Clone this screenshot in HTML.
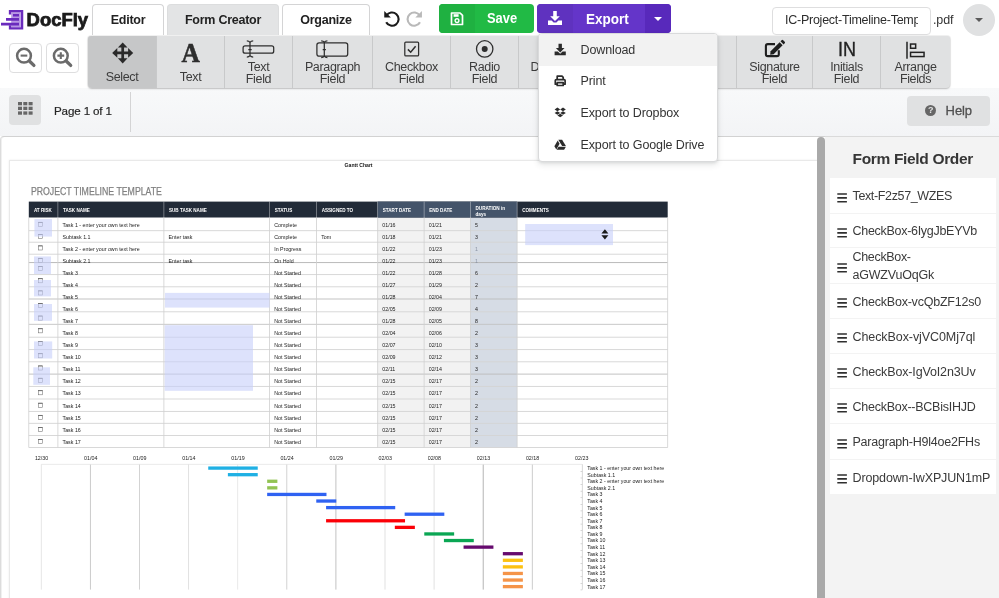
<!DOCTYPE html>
<html><head><meta charset="utf-8"><title>DocFly</title>
<style>
*{box-sizing:border-box;margin:0;padding:0}
html,body{width:999px;height:598px;overflow:hidden;background:#fff}
body{font-family:"Liberation Sans",sans-serif;color:#333;position:relative;font-size:13px;will-change:transform}
.abs{position:absolute}
.t{position:absolute;white-space:nowrap;line-height:1}
/* top bar */
#topbar{position:absolute;left:0;top:0;width:999px;height:37px;background:#fff}
.tab{position:absolute;top:4px;height:31px;border:1px solid #d4d4d5;border-bottom:none;border-radius:4px 4px 0 0;background:#fff}
.tab.gray{background:#e3e4e5;border-color:#dcddde}
.tab span{position:absolute;left:0;right:0;top:8px;text-align:center;font-size:12.5px;font-weight:bold;color:#222;line-height:14px;letter-spacing:-0.25px}
/* toolbar */
#toolbar{position:absolute;left:88px;top:36px;width:862px;height:52px;background:#e0e1e2;border-radius:3px 3px 4px 4px;box-shadow:0 1px 2px rgba(0,0,0,.2), 0 0 0 1px rgba(0,0,0,.05)}
.tool{position:absolute;top:0;height:52px;border-right:1px solid #c8c9ca}
.tool .lbl{position:absolute;left:0;right:0;text-align:center;font-size:12.5px;color:#3c3c3c;line-height:12px;letter-spacing:-0.35px}
.tool.sel{background:#c6c7c8}
/* sub bar */
#subbar{position:absolute;left:0;top:88px;width:999px;height:48px;background:linear-gradient(#f8f9fa,#f3f4f6)}
.btn{position:absolute;border-radius:4px;background:#e0e1e2}
.zbtn{position:absolute;top:43px;width:33px;height:30px;border:1px solid #dededf;border-radius:4px;background:#fff}
/* doc */
#docwrap{position:absolute;left:0;top:136px;width:825px;height:462px;background:#fff;overflow:hidden}
#outer{position:absolute;left:0;top:0;width:840px;height:480px;background:#fff;border:1px solid #d2d2d2;border-left-color:#dcdcdc;border-radius:4px 0 0 0;box-shadow:inset 1px 0 0 #f0f0f0}
#page{position:absolute;left:9px;top:24px;width:830px;height:460px;background:#fff;border:1px solid #e9e9e9;box-shadow:0 0 2px rgba(0,0,0,.08)}
#pdf{position:absolute;left:0;top:0;overflow:hidden}
#scroll{position:absolute;left:817px;top:137px;width:8px;height:470px;background:#a9a9a9;border-radius:4px 4px 0 0}
/* side */
#side{position:absolute;left:825px;top:136px;width:174px;height:462px;background:#f3f3f3;box-shadow:inset 0 1px 0 #dadada}
.fitem{position:absolute;left:5px;width:166px;background:#fff}
.fitem .tx{position:absolute;left:22.5px;font-size:12.5px;color:#3a3a3a;white-space:nowrap;line-height:18px}
.burger{position:absolute;left:7px;width:10px;height:9px;border-top:1.6px solid #333;border-bottom:1.6px solid #333}
.burger:after{content:"";position:absolute;left:0;right:0;top:2.1px;height:1.6px;background:#333}
/* menu */
#menu{position:absolute;left:538px;top:33px;width:180px;height:129px;background:#fff;border:1px solid #d9dadb;border-radius:4px;box-shadow:0 1px 3px rgba(34,36,38,.10), 0 3px 6px rgba(34,36,38,.10)}
.mi{position:absolute;left:0;width:178px;height:32px}
.mi span{position:absolute;left:41.5px;top:8px;font-size:12.5px;color:#333;line-height:16px;white-space:nowrap;letter-spacing:-0.12px}

</style></head>
<body>
<div id="topbar">
  <!-- logo -->
  <svg class="abs" style="left:0;top:0" width="92" height="37" viewBox="0 0 92 37" font-family="'Liberation Sans', sans-serif">
    <rect x="11.2" y="12.2" width="9.6" height="15" fill="#b897e4"/>
    <path d="M10 14.6V11.100H22.100V28.400H10V25.200" fill="none" stroke="#6a2bbd" stroke-width="2.300"/>
    <path d="M13 15.250H19M6 19.400H19M1 24.150H19" fill="none" stroke="#6a2bbd" stroke-width="2.600"/>
    <text x="26.6" y="26.200" font-size="17.800" font-weight="bold" fill="#1b1b1b" stroke="#1b1b1b" stroke-width="0.750" textLength="61.500" lengthAdjust="spacingAndGlyphs">DocFly</text>
  </svg>
  <div class="tab" style="left:92px;width:72px"><span>Editor</span></div>
  <div class="tab gray" style="left:167px;width:112px"><span>Form Creator</span></div>
  <div class="tab" style="left:282px;width:88px"><span>Organize</span></div>
  <!-- undo / redo -->
  <svg class="abs" style="left:382.900px;top:8.800px" width="19.200" height="19.200" viewBox="0 0 18 18"><path d="M3.2 6.2A6.2 6.2 0 1 1 3 12.4" fill="none" stroke="#1b1b1b" stroke-width="2"/><path d="M1.2 1.8V8H7.4Z" fill="#1b1b1b"/></svg>
  <svg class="abs" style="left:403.600px;top:8.800px" width="19.200" height="19.200" viewBox="0 0 18 18"><path d="M14.8 6.2A6.2 6.2 0 1 0 15 12.4" fill="none" stroke="#b9b9b9" stroke-width="2"/><path d="M16.8 1.8V8H10.6Z" fill="#b9b9b9"/></svg>
  <!-- save -->
  <div class="abs" style="left:439px;top:4px;width:95px;height:29px;background:#21ba45;border-radius:4px;overflow:hidden">
    <div class="abs" style="left:0;top:0;width:36px;height:29px;background:#1fb141"></div>
    <svg class="abs" style="left:11px;top:8px" width="14" height="14" viewBox="0 0 14 14"><path d="M1.5 1h8.6l2.4 2.4v9.1h-11z" fill="none" stroke="#fff" stroke-width="1.7" stroke-linejoin="round"/><rect x="3.6" y="2.2" width="5" height="2.6" fill="#fff"/><circle cx="7" cy="8.6" r="1.9" fill="none" stroke="#fff" stroke-width="1.4"/></svg>
    <div class="t" style="left:48.200px;top:6.400px;font-size:15px;font-weight:bold;color:#fff;transform:scaleX(0.860);transform-origin:0 0">Save</div>
  </div>
  <!-- export -->
  <div class="abs" style="left:537px;top:4px;width:134px;height:29px;background:#6435c9;border-radius:4px;overflow:hidden">
    <div class="abs" style="left:0;top:0;width:36px;height:29px;background:#5f32bf"></div>
    <div class="abs" style="left:108px;top:0;width:26px;height:29px;background:#5829bb"></div>
    <svg class="abs" style="left:11px;top:7px" width="14" height="15" viewBox="0 0 14 15"><path d="M5.2 0h3.6v5.2h3L7 10 2.200 5.2h3z" fill="#fff"/><path d="M0 9.600h3.600l2 2h2.800l2-2H14v4.400H0z" fill="#fff"/></svg>
    <div class="t" style="left:49.200px;top:6.600px;font-size:15px;font-weight:bold;color:#fff;transform:scaleX(0.900);transform-origin:0 0">Export</div>
    <div class="abs" style="left:117px;top:13px;width:0;height:0;border-left:4px solid transparent;border-right:4px solid transparent;border-top:4.500px solid #fff"></div>
  </div>
  <!-- filename -->
  <div class="abs" style="left:772px;top:7px;width:159px;height:28px;border:1px solid #dededf;border-radius:4px;background:#fff;overflow:hidden">
    <div class="t" style="left:12px;top:6px;font-size:12.500px;color:#2d2d2d;width:133px;overflow:hidden;letter-spacing:-0.250px">IC-Project-Timeline-Template</div>
  </div>
  <div class="t" style="left:933px;top:13.500px;font-size:12.500px;color:#333;letter-spacing:-0.100px">.pdf</div>
  <div class="abs" style="left:963px;top:4px;width:32px;height:32px;border-radius:16px;background:#e0e1e2"></div>
  <div class="abs" style="left:975px;top:18px;width:0;height:0;border-left:4px solid transparent;border-right:4px solid transparent;border-top:4px solid #5a5a5a"></div>
</div>
<div class="zbtn" style="left:9px"></div>
<div class="zbtn" style="left:46px"></div>
<svg class="abs" style="left:0;top:36px" width="88" height="50" viewBox="0 36 88 50">
  <g fill="none" stroke="#6b6b6b">
    <circle cx="24" cy="55.650" r="6.900" stroke-width="2.500"/>
    <path d="M29.600 61.200L33.900 65.400" stroke-width="3.300" stroke-linecap="round"/>
    <path d="M20.600 55.600H27.300" stroke-width="2.100"/>
    <circle cx="60.800" cy="55.650" r="6.900" stroke-width="2.500"/>
    <path d="M66.400 61.200L70.700 65.400" stroke-width="3.300" stroke-linecap="round"/>
    <path d="M57.400 55.600H64.200M60.800 52.200V59" stroke-width="2.100"/>
  </g>
</svg>
<div id="subbar">
  <div class="btn" style="left:9px;top:7px;width:32px;height:30px"></div>
  <svg class="abs" style="left:17.600px;top:14.300px" width="15" height="13" viewBox="0 0 15 13"><g fill="#666"><rect x="0" y="0" width="4" height="3.300"/><rect x="5.300" y="0" width="4" height="3.300"/><rect x="10.600" y="0" width="4" height="3.300"/><rect x="0" y="4.700" width="4" height="3.300"/><rect x="5.300" y="4.700" width="4" height="3.300"/><rect x="10.600" y="4.700" width="4" height="3.300"/><rect x="0" y="9.400" width="4" height="3.300"/><rect x="5.300" y="9.400" width="4" height="3.300"/><rect x="10.600" y="9.400" width="4" height="3.300"/></g></svg>
  <div class="t" style="left:54px;top:17.400px;font-size:11.600px;color:#262626;letter-spacing:-0.130px;-webkit-text-stroke:0.200px #262626">Page 1 of 1</div>
  <div class="abs" style="left:130px;top:4px;width:1px;height:40px;background:#d4d4d5"></div>
  <div class="btn" style="left:907px;top:8px;width:83px;height:30px"></div>
  <div class="abs" style="left:924.700px;top:17px;width:11.400px;height:11.400px;border-radius:6px;background:#666"></div>
  <div class="t" style="left:927.900px;top:18.300px;font-size:9px;font-weight:bold;color:#e0e1e2">?</div>
  <div class="t" style="left:945.600px;top:16px;font-size:13px;color:#505050;-webkit-text-stroke:0.300px #505050;letter-spacing:-0.100px">Help</div>
</div>
<div id="toolbar">
  <div class="tool sel" style="left:0;width:69px;border-radius:3px 0 0 4px"><div class="lbl" style="top:35px">Select</div></div>
  <div class="tool" style="left:69px;width:68px"><div class="lbl" style="top:35px">Text</div></div>
  <div class="tool" style="left:137px;width:68px"><div class="lbl" style="top:25.400px">Text<br>Field</div></div>
  <div class="tool" style="left:205px;width:80px"><div class="lbl" style="top:25.400px">Paragraph<br>Field</div></div>
  <div class="tool" style="left:285px;width:78px"><div class="lbl" style="top:25.400px">Checkbox<br>Field</div></div>
  <div class="tool" style="left:363px;width:68px"><div class="lbl" style="top:25.400px">Radio<br>Field</div></div>
  <div class="tool" style="left:431px;width:78px"><div class="lbl" style="top:25.400px">Dropdown<br>Field</div></div>
  <div class="tool" style="left:509px;width:70px"><div class="lbl" style="top:25.400px">Date<br>Field</div></div>
  <div class="tool" style="left:579px;width:70px"><div class="lbl" style="top:25.400px">Image<br>Field</div></div>
  <div class="tool" style="left:649px;width:76px"><div class="lbl" style="top:25.400px">Signature<br>Field</div></div>
  <div class="tool" style="left:725px;width:68px"><div class="lbl" style="top:25.400px">Initials<br>Field</div></div>
  <div class="tool" style="left:793px;width:69px;border-right:none"><div class="lbl" style="top:25.400px">Arrange<br>Fields</div></div>
</div>
<!-- toolbar icons (absolute page coords) -->
<svg class="abs" style="left:88px;top:36px" width="863" height="30" viewBox="88 36 863 30" font-family="'Liberation Sans', sans-serif">
  <!-- select: move arrows -->
  <g fill="none" stroke="#2a2a2a" stroke-width="2.700">
    <path d="M116 52.900H129.400M122.700 46.200V59.600"/>
  </g>
  <g fill="#2a2a2a">
    <path d="M122.700 42.400L127.500 47.500H117.900z"/>
    <path d="M122.700 63.400L127.500 58.300H117.900z"/>
    <path d="M112.200 52.900L117.300 48.100V57.700z"/>
    <path d="M133.200 52.900L128.100 48.100V57.700z"/>
  </g>
  <!-- Text: serif A -->
  <text x="181.500" y="62.300" font-family="'Liberation Serif', serif" font-weight="bold" font-size="26.500" fill="#2e2e2e" stroke="#2e2e2e" stroke-width="0.500" textLength="18.400" lengthAdjust="spacingAndGlyphs">A</text>
  <!-- Text field -->
  <g fill="none" stroke="#2e2e2e" stroke-width="1.250">
    <rect x="243.100" y="45.800" width="30.600" height="7.400" rx="2"/>
    <path d="M250 41.800V56.200M246.800 40.900Q249 40.900 250 42.300Q251 40.900 253.200 40.900M246.800 57.100Q249 57.100 250 55.700Q251 57.100 253.200 57.100M248.300 49.500H251.700"/>
  </g>
  <!-- Paragraph field -->
  <g fill="none" stroke="#2e2e2e" stroke-width="1.250">
    <rect x="316.900" y="42.800" width="30.800" height="13.400" rx="2.200"/>
    <path d="M324.300 41.600V56.800M321.200 40.800Q323.300 40.800 324.300 42.200Q325.300 40.800 327.400 40.800M321.200 57.600Q323.300 57.600 324.300 56.200Q325.300 57.600 327.400 57.600M322.700 49.500H325.900"/>
  </g>
  <!-- Checkbox -->
  <g fill="none" stroke="#2e2e2e">
    <rect x="404.800" y="42.100" width="13.800" height="13.800" rx="1" stroke-width="1.250"/>
    <path d="M407.900 49.400L410.700 52.200L415.600 46.300" stroke-width="1.500"/>
  </g>
  <!-- Radio -->
  <circle cx="484.700" cy="48.900" r="8.200" fill="none" stroke="#2e2e2e" stroke-width="1.300"/>
  <circle cx="484.700" cy="48.900" r="3" fill="#2e2e2e"/>
  <!-- Signature: pen-square -->
  <g>
    <path d="M775 44.100H767.800Q765.900 44.100 765.900 46V54.200Q765.900 56.100 767.800 56.100H776.900Q778.800 56.100 778.800 54.200V50.200" fill="none" stroke="#1f1f1f" stroke-width="2.100"/>
    <path d="M770.600 51.200L779.600 42.200L782.600 45.200L773.600 54.200L770.200 54.700z" fill="#1f1f1f"/>
    <path d="M780.500 41.300L781.600 40.200Q782.400 39.400 783.200 40.200L784.700 41.700Q785.500 42.500 784.700 43.300L783.600 44.400z" fill="#1f1f1f"/>
  </g>
  <!-- Initials -->
  <text x="837.900" y="55.700" font-size="19.300" fill="#222" stroke="#222" stroke-width="0.350" textLength="18" lengthAdjust="spacingAndGlyphs">IN</text>
  <!-- Arrange -->
  <g fill="none" stroke="#222" stroke-width="1.500">
    <path d="M907 41.700V58.700"/>
    <rect x="910.550" y="44.050" width="5.100" height="4.200"/>
    <rect x="910.550" y="52.350" width="13.500" height="4.200"/>
  </g>
</svg>
<div id="docwrap">
<div id="outer"></div>
<div id="page"></div>
<svg id="pdf" class="abs" style="left:0;top:0" width="817" height="462" viewBox="0 0 817 462" font-family="'Liberation Sans', sans-serif">
<text x="344.6" y="30.6" font-size="4.8" fill="#111" textLength="27.98" lengthAdjust="spacingAndGlyphs" font-weight="bold">Gantt Chart</text>
<text x="30.9" y="59" font-size="11.2" fill="#808080" textLength="131.07" lengthAdjust="spacingAndGlyphs" stroke="#808080" stroke-width="0.25">PROJECT TIMELINE TEMPLATE</text>
<rect x="377.7" y="81.5" width="92.7" height="230" fill="#f2f2f2"/>
<rect x="470.4" y="81.5" width="46.7" height="230" fill="#d6dce5"/>
<rect x="28.8" y="65.6" width="638.9" height="15.9" fill="#222b38"/>
<rect x="377.7" y="65.6" width="139.4" height="15.9" fill="#44546a"/>
<rect x="57.6" y="65.6" width="0.6" height="15.9" fill="#fff" opacity=".6"/>
<rect x="163.6" y="65.6" width="0.6" height="15.9" fill="#fff" opacity=".6"/>
<rect x="269.3" y="65.6" width="0.6" height="15.9" fill="#fff" opacity=".6"/>
<rect x="316.3" y="65.6" width="0.6" height="15.9" fill="#fff" opacity=".6"/>
<rect x="377.4" y="65.6" width="0.6" height="15.9" fill="#fff" opacity=".6"/>
<rect x="423.8" y="65.6" width="0.6" height="15.9" fill="#fff" opacity=".6"/>
<rect x="470.1" y="65.6" width="0.6" height="15.9" fill="#fff" opacity=".6"/>
<rect x="516.8" y="65.6" width="0.6" height="15.9" fill="#fff" opacity=".6"/>
<text x="33.9" y="75.8" font-size="5" fill="#fff" textLength="17.96" lengthAdjust="spacingAndGlyphs" font-weight="bold">AT RISK</text>
<text x="63" y="75.8" font-size="5" fill="#fff" textLength="26.86" lengthAdjust="spacingAndGlyphs" font-weight="bold">TASK NAME</text>
<text x="169" y="75.8" font-size="5" fill="#fff" textLength="37.79" lengthAdjust="spacingAndGlyphs" font-weight="bold">SUB TASK NAME</text>
<text x="274.7" y="75.8" font-size="5" fill="#fff" textLength="17.62" lengthAdjust="spacingAndGlyphs" font-weight="bold">STATUS</text>
<text x="321.7" y="75.8" font-size="5" fill="#fff" textLength="31.44" lengthAdjust="spacingAndGlyphs" font-weight="bold">ASSIGNED TO</text>
<text x="382.8" y="75.8" font-size="5" fill="#fff" textLength="28.29" lengthAdjust="spacingAndGlyphs" font-weight="bold">START DATE</text>
<text x="429.2" y="75.8" font-size="5" fill="#fff" textLength="23.05" lengthAdjust="spacingAndGlyphs" font-weight="bold">END DATE</text>
<text x="522.2" y="75.8" font-size="5" fill="#fff" textLength="26.69" lengthAdjust="spacingAndGlyphs" font-weight="bold">COMMENTS</text>
<text x="475.5" y="73.6" font-size="4.7" fill="#fff" textLength="29.64" lengthAdjust="spacingAndGlyphs" font-weight="bold">DURATION in</text>
<text x="475.5" y="79.6" font-size="4.7" fill="#fff" textLength="10.6" lengthAdjust="spacingAndGlyphs" font-weight="bold">days</text>
<rect x="28.8" y="94.25" width="638.9" height="0.9" fill="#d4d4d4"/>
<rect x="28.8" y="105.75" width="638.9" height="0.9" fill="#d4d4d4"/>
<rect x="28.8" y="117.75" width="638.9" height="0.9" fill="#d4d4d4"/>
<rect x="28.8" y="126.15" width="638.9" height="0.9" fill="#b4b4b4"/>
<rect x="28.8" y="138.15" width="638.9" height="0.9" fill="#d4d4d4"/>
<rect x="28.8" y="150.35" width="638.9" height="0.9" fill="#d4d4d4"/>
<rect x="28.8" y="162.55" width="638.9" height="0.9" fill="#bcbcbc"/>
<rect x="28.8" y="175.35" width="638.9" height="0.9" fill="#d4d4d4"/>
<rect x="28.8" y="187.85" width="638.9" height="0.9" fill="#c2c2c2"/>
<rect x="28.8" y="200.75" width="638.9" height="0.9" fill="#d4d4d4"/>
<rect x="28.8" y="213.15" width="638.9" height="0.9" fill="#d4d4d4"/>
<rect x="28.8" y="225.35" width="638.9" height="0.9" fill="#d4d4d4"/>
<rect x="28.8" y="237.65" width="638.9" height="0.9" fill="#bcbcbc"/>
<rect x="28.8" y="249.95" width="638.9" height="0.9" fill="#d4d4d4"/>
<rect x="28.8" y="262.55" width="638.9" height="0.9" fill="#d4d4d4"/>
<rect x="28.8" y="274.95" width="638.9" height="0.9" fill="#d4d4d4"/>
<rect x="28.8" y="286.85" width="638.9" height="0.9" fill="#d4d4d4"/>
<rect x="28.8" y="299.05" width="638.9" height="0.9" fill="#d4d4d4"/>
<rect x="28.8" y="311.05" width="638.9" height="0.9" fill="#d4d4d4"/>
<rect x="28.4" y="81.5" width="0.8" height="230" fill="#d0d0d0"/>
<rect x="57.5" y="81.5" width="0.8" height="230" fill="#d0d0d0"/>
<rect x="163.5" y="81.5" width="0.8" height="230" fill="#d0d0d0"/>
<rect x="269.2" y="81.5" width="0.8" height="230" fill="#d0d0d0"/>
<rect x="316.2" y="81.5" width="0.8" height="230" fill="#d0d0d0"/>
<rect x="377.3" y="81.5" width="0.8" height="230" fill="#d0d0d0"/>
<rect x="423.7" y="81.5" width="0.8" height="230" fill="#d0d0d0"/>
<rect x="470" y="81.5" width="0.8" height="230" fill="#d0d0d0"/>
<rect x="516.7" y="81.5" width="0.8" height="230" fill="#d0d0d0"/>
<rect x="667.3" y="81.5" width="0.8" height="230" fill="#d0d0d0"/>
<rect x="38.3" y="86.2" width="4.2" height="4.2" fill="#fff" stroke="#6e6e6e" stroke-width="0.55"/>
<rect x="38.3" y="86" width="4.2" height="0.7" fill="#555"/>
<text x="62.5" y="90.75" font-size="5.5" fill="#222" textLength="77.28" lengthAdjust="spacingAndGlyphs">Task 1 - enter your own text here</text>
<text x="274.2" y="90.75" font-size="5.5" fill="#222" textLength="22.71" lengthAdjust="spacingAndGlyphs">Complete</text>
<text x="382.3" y="90.75" font-size="5.5" fill="#222" textLength="13.28" lengthAdjust="spacingAndGlyphs">01/16</text>
<text x="428.7" y="90.75" font-size="5.5" fill="#222" textLength="13.28" lengthAdjust="spacingAndGlyphs">01/21</text>
<text x="475" y="90.75" font-size="5.5" fill="#222" textLength="2.95" lengthAdjust="spacingAndGlyphs">5</text>
<rect x="38.3" y="98.5" width="4.2" height="4.2" fill="#fff" stroke="#6e6e6e" stroke-width="0.55"/>
<rect x="38.3" y="98.3" width="4.2" height="0.7" fill="#555"/>
<text x="62.5" y="102.8" font-size="5.5" fill="#222" textLength="28.03" lengthAdjust="spacingAndGlyphs">Subtask 1.1</text>
<text x="168.5" y="102.8" font-size="5.5" fill="#222" textLength="23.89" lengthAdjust="spacingAndGlyphs">Enter task</text>
<text x="274.2" y="102.8" font-size="5.5" fill="#222" textLength="22.71" lengthAdjust="spacingAndGlyphs">Complete</text>
<text x="321.2" y="102.8" font-size="5.5" fill="#222" textLength="10.03" lengthAdjust="spacingAndGlyphs">Tom</text>
<text x="382.3" y="102.8" font-size="5.5" fill="#222" textLength="13.28" lengthAdjust="spacingAndGlyphs">01/18</text>
<text x="428.7" y="102.8" font-size="5.5" fill="#222" textLength="13.28" lengthAdjust="spacingAndGlyphs">01/21</text>
<text x="475" y="102.8" font-size="5.5" fill="#222" textLength="2.95" lengthAdjust="spacingAndGlyphs">3</text>
<rect x="38.3" y="109.8" width="4.2" height="4.2" fill="#fff" stroke="#6e6e6e" stroke-width="0.55"/>
<rect x="38.3" y="109.6" width="4.2" height="0.7" fill="#555"/>
<text x="62.5" y="114.85" font-size="5.5" fill="#222" textLength="77.28" lengthAdjust="spacingAndGlyphs">Task 2 - enter your own text here</text>
<text x="274.2" y="114.85" font-size="5.5" fill="#222" textLength="27.14" lengthAdjust="spacingAndGlyphs">In Progress</text>
<text x="382.3" y="114.85" font-size="5.5" fill="#222" textLength="13.28" lengthAdjust="spacingAndGlyphs">01/22</text>
<text x="428.7" y="114.85" font-size="5.5" fill="#222" textLength="13.28" lengthAdjust="spacingAndGlyphs">01/23</text>
<text x="475" y="114.85" font-size="5.5" fill="#8a93a3" textLength="2.95" lengthAdjust="spacingAndGlyphs">1</text>
<rect x="38.3" y="122.2" width="4.2" height="4.2" fill="#fff" stroke="#6e6e6e" stroke-width="0.55"/>
<rect x="38.3" y="122" width="4.2" height="0.7" fill="#555"/>
<text x="62.5" y="126.9" font-size="5.5" fill="#222" textLength="28.03" lengthAdjust="spacingAndGlyphs">Subtask 2.1</text>
<text x="168.5" y="126.9" font-size="5.5" fill="#222" textLength="23.89" lengthAdjust="spacingAndGlyphs">Enter task</text>
<text x="274.2" y="126.9" font-size="5.5" fill="#222" textLength="19.47" lengthAdjust="spacingAndGlyphs">On Hold</text>
<text x="382.3" y="126.9" font-size="5.5" fill="#222" textLength="13.28" lengthAdjust="spacingAndGlyphs">01/22</text>
<text x="428.7" y="126.9" font-size="5.5" fill="#222" textLength="13.28" lengthAdjust="spacingAndGlyphs">01/23</text>
<text x="475" y="126.9" font-size="5.5" fill="#8a93a3" textLength="2.95" lengthAdjust="spacingAndGlyphs">1</text>
<rect x="38.3" y="130.5" width="4.2" height="4.2" fill="#fff" stroke="#6e6e6e" stroke-width="0.55"/>
<rect x="38.3" y="130.3" width="4.2" height="0.7" fill="#555"/>
<text x="62.5" y="138.95" font-size="5.5" fill="#222" textLength="15.34" lengthAdjust="spacingAndGlyphs">Task 3</text>
<text x="274.2" y="138.95" font-size="5.5" fill="#222" textLength="26.84" lengthAdjust="spacingAndGlyphs">Not Started</text>
<text x="382.3" y="138.95" font-size="5.5" fill="#222" textLength="13.28" lengthAdjust="spacingAndGlyphs">01/22</text>
<text x="428.7" y="138.95" font-size="5.5" fill="#222" textLength="13.28" lengthAdjust="spacingAndGlyphs">01/28</text>
<text x="475" y="138.95" font-size="5.5" fill="#222" textLength="2.95" lengthAdjust="spacingAndGlyphs">6</text>
<rect x="38.3" y="142.6" width="4.2" height="4.2" fill="#fff" stroke="#6e6e6e" stroke-width="0.55"/>
<rect x="38.3" y="142.4" width="4.2" height="0.7" fill="#555"/>
<text x="62.5" y="151" font-size="5.5" fill="#222" textLength="15.34" lengthAdjust="spacingAndGlyphs">Task 4</text>
<text x="274.2" y="151" font-size="5.5" fill="#222" textLength="26.84" lengthAdjust="spacingAndGlyphs">Not Started</text>
<text x="382.3" y="151" font-size="5.5" fill="#222" textLength="13.28" lengthAdjust="spacingAndGlyphs">01/27</text>
<text x="428.7" y="151" font-size="5.5" fill="#222" textLength="13.28" lengthAdjust="spacingAndGlyphs">01/29</text>
<text x="475" y="151" font-size="5.5" fill="#222" textLength="2.95" lengthAdjust="spacingAndGlyphs">2</text>
<rect x="38.3" y="154.8" width="4.2" height="4.2" fill="#fff" stroke="#6e6e6e" stroke-width="0.55"/>
<rect x="38.3" y="154.6" width="4.2" height="0.7" fill="#555"/>
<text x="62.5" y="163.05" font-size="5.5" fill="#222" textLength="15.34" lengthAdjust="spacingAndGlyphs">Task 5</text>
<text x="274.2" y="163.05" font-size="5.5" fill="#222" textLength="26.84" lengthAdjust="spacingAndGlyphs">Not Started</text>
<text x="382.3" y="163.05" font-size="5.5" fill="#222" textLength="13.28" lengthAdjust="spacingAndGlyphs">01/28</text>
<text x="428.7" y="163.05" font-size="5.5" fill="#222" textLength="13.28" lengthAdjust="spacingAndGlyphs">02/04</text>
<text x="475" y="163.05" font-size="5.5" fill="#222" textLength="2.95" lengthAdjust="spacingAndGlyphs">7</text>
<rect x="38.3" y="167.3" width="4.2" height="4.2" fill="#fff" stroke="#6e6e6e" stroke-width="0.55"/>
<rect x="38.3" y="167.1" width="4.2" height="0.7" fill="#555"/>
<text x="62.5" y="175.1" font-size="5.5" fill="#222" textLength="15.34" lengthAdjust="spacingAndGlyphs">Task 6</text>
<text x="274.2" y="175.1" font-size="5.5" fill="#222" textLength="26.84" lengthAdjust="spacingAndGlyphs">Not Started</text>
<text x="382.3" y="175.1" font-size="5.5" fill="#222" textLength="13.28" lengthAdjust="spacingAndGlyphs">02/05</text>
<text x="428.7" y="175.1" font-size="5.5" fill="#222" textLength="13.28" lengthAdjust="spacingAndGlyphs">02/09</text>
<text x="475" y="175.1" font-size="5.5" fill="#222" textLength="2.95" lengthAdjust="spacingAndGlyphs">4</text>
<rect x="38.3" y="179.95" width="4.2" height="4.2" fill="#fff" stroke="#6e6e6e" stroke-width="0.55"/>
<rect x="38.3" y="179.75" width="4.2" height="0.7" fill="#555"/>
<text x="62.5" y="187.15" font-size="5.5" fill="#222" textLength="15.34" lengthAdjust="spacingAndGlyphs">Task 7</text>
<text x="274.2" y="187.15" font-size="5.5" fill="#222" textLength="26.84" lengthAdjust="spacingAndGlyphs">Not Started</text>
<text x="382.3" y="187.15" font-size="5.5" fill="#222" textLength="13.28" lengthAdjust="spacingAndGlyphs">01/28</text>
<text x="428.7" y="187.15" font-size="5.5" fill="#222" textLength="13.28" lengthAdjust="spacingAndGlyphs">02/05</text>
<text x="475" y="187.15" font-size="5.5" fill="#222" textLength="2.95" lengthAdjust="spacingAndGlyphs">8</text>
<rect x="38.3" y="192.65" width="4.2" height="4.2" fill="#fff" stroke="#6e6e6e" stroke-width="0.55"/>
<rect x="38.3" y="192.45" width="4.2" height="0.7" fill="#555"/>
<text x="62.5" y="199.2" font-size="5.5" fill="#222" textLength="15.34" lengthAdjust="spacingAndGlyphs">Task 8</text>
<text x="274.2" y="199.2" font-size="5.5" fill="#222" textLength="26.84" lengthAdjust="spacingAndGlyphs">Not Started</text>
<text x="382.3" y="199.2" font-size="5.5" fill="#222" textLength="13.28" lengthAdjust="spacingAndGlyphs">02/04</text>
<text x="428.7" y="199.2" font-size="5.5" fill="#222" textLength="13.28" lengthAdjust="spacingAndGlyphs">02/06</text>
<text x="475" y="199.2" font-size="5.5" fill="#222" textLength="2.95" lengthAdjust="spacingAndGlyphs">2</text>
<rect x="38.3" y="205.3" width="4.2" height="4.2" fill="#fff" stroke="#6e6e6e" stroke-width="0.55"/>
<rect x="38.3" y="205.1" width="4.2" height="0.7" fill="#555"/>
<text x="62.5" y="211.25" font-size="5.5" fill="#222" textLength="15.34" lengthAdjust="spacingAndGlyphs">Task 9</text>
<text x="274.2" y="211.25" font-size="5.5" fill="#222" textLength="26.84" lengthAdjust="spacingAndGlyphs">Not Started</text>
<text x="382.3" y="211.25" font-size="5.5" fill="#222" textLength="13.28" lengthAdjust="spacingAndGlyphs">02/07</text>
<text x="428.7" y="211.25" font-size="5.5" fill="#222" textLength="13.28" lengthAdjust="spacingAndGlyphs">02/10</text>
<text x="475" y="211.25" font-size="5.5" fill="#222" textLength="2.95" lengthAdjust="spacingAndGlyphs">3</text>
<rect x="38.3" y="217.6" width="4.2" height="4.2" fill="#fff" stroke="#6e6e6e" stroke-width="0.55"/>
<rect x="38.3" y="217.4" width="4.2" height="0.7" fill="#555"/>
<text x="62.5" y="223.3" font-size="5.5" fill="#222" textLength="18.29" lengthAdjust="spacingAndGlyphs">Task 10</text>
<text x="274.2" y="223.3" font-size="5.5" fill="#222" textLength="26.84" lengthAdjust="spacingAndGlyphs">Not Started</text>
<text x="382.3" y="223.3" font-size="5.5" fill="#222" textLength="13.28" lengthAdjust="spacingAndGlyphs">02/09</text>
<text x="428.7" y="223.3" font-size="5.5" fill="#222" textLength="13.28" lengthAdjust="spacingAndGlyphs">02/12</text>
<text x="475" y="223.3" font-size="5.5" fill="#222" textLength="2.95" lengthAdjust="spacingAndGlyphs">3</text>
<rect x="38.3" y="229.85" width="4.2" height="4.2" fill="#fff" stroke="#6e6e6e" stroke-width="0.55"/>
<rect x="38.3" y="229.65" width="4.2" height="0.7" fill="#555"/>
<text x="62.5" y="235.35" font-size="5.5" fill="#222" textLength="17.9" lengthAdjust="spacingAndGlyphs">Task 11</text>
<text x="274.2" y="235.35" font-size="5.5" fill="#222" textLength="26.84" lengthAdjust="spacingAndGlyphs">Not Started</text>
<text x="382.3" y="235.35" font-size="5.5" fill="#222" textLength="12.89" lengthAdjust="spacingAndGlyphs">02/11</text>
<text x="428.7" y="235.35" font-size="5.5" fill="#222" textLength="13.28" lengthAdjust="spacingAndGlyphs">02/14</text>
<text x="475" y="235.35" font-size="5.5" fill="#222" textLength="2.95" lengthAdjust="spacingAndGlyphs">3</text>
<rect x="38.3" y="242.15" width="4.2" height="4.2" fill="#fff" stroke="#6e6e6e" stroke-width="0.55"/>
<rect x="38.3" y="241.95" width="4.2" height="0.7" fill="#555"/>
<text x="62.5" y="247.4" font-size="5.5" fill="#222" textLength="18.29" lengthAdjust="spacingAndGlyphs">Task 12</text>
<text x="274.2" y="247.4" font-size="5.5" fill="#222" textLength="26.84" lengthAdjust="spacingAndGlyphs">Not Started</text>
<text x="382.3" y="247.4" font-size="5.5" fill="#222" textLength="13.28" lengthAdjust="spacingAndGlyphs">02/15</text>
<text x="428.7" y="247.4" font-size="5.5" fill="#222" textLength="13.28" lengthAdjust="spacingAndGlyphs">02/17</text>
<text x="475" y="247.4" font-size="5.5" fill="#222" textLength="2.95" lengthAdjust="spacingAndGlyphs">2</text>
<rect x="38.3" y="254.6" width="4.2" height="4.2" fill="#fff" stroke="#6e6e6e" stroke-width="0.55"/>
<rect x="38.3" y="254.4" width="4.2" height="0.7" fill="#555"/>
<text x="62.5" y="259.45" font-size="5.5" fill="#222" textLength="18.29" lengthAdjust="spacingAndGlyphs">Task 13</text>
<text x="274.2" y="259.45" font-size="5.5" fill="#222" textLength="26.84" lengthAdjust="spacingAndGlyphs">Not Started</text>
<text x="382.3" y="259.45" font-size="5.5" fill="#222" textLength="13.28" lengthAdjust="spacingAndGlyphs">02/15</text>
<text x="428.7" y="259.45" font-size="5.5" fill="#222" textLength="13.28" lengthAdjust="spacingAndGlyphs">02/17</text>
<text x="475" y="259.45" font-size="5.5" fill="#222" textLength="2.95" lengthAdjust="spacingAndGlyphs">2</text>
<rect x="38.3" y="267.1" width="4.2" height="4.2" fill="#fff" stroke="#6e6e6e" stroke-width="0.55"/>
<rect x="38.3" y="266.9" width="4.2" height="0.7" fill="#555"/>
<text x="62.5" y="271.5" font-size="5.5" fill="#222" textLength="18.29" lengthAdjust="spacingAndGlyphs">Task 14</text>
<text x="274.2" y="271.5" font-size="5.5" fill="#222" textLength="26.84" lengthAdjust="spacingAndGlyphs">Not Started</text>
<text x="382.3" y="271.5" font-size="5.5" fill="#222" textLength="13.28" lengthAdjust="spacingAndGlyphs">02/15</text>
<text x="428.7" y="271.5" font-size="5.5" fill="#222" textLength="13.28" lengthAdjust="spacingAndGlyphs">02/17</text>
<text x="475" y="271.5" font-size="5.5" fill="#222" textLength="2.95" lengthAdjust="spacingAndGlyphs">2</text>
<rect x="38.3" y="279.25" width="4.2" height="4.2" fill="#fff" stroke="#6e6e6e" stroke-width="0.55"/>
<rect x="38.3" y="279.05" width="4.2" height="0.7" fill="#555"/>
<text x="62.5" y="283.55" font-size="5.5" fill="#222" textLength="18.29" lengthAdjust="spacingAndGlyphs">Task 15</text>
<text x="274.2" y="283.55" font-size="5.5" fill="#222" textLength="26.84" lengthAdjust="spacingAndGlyphs">Not Started</text>
<text x="382.3" y="283.55" font-size="5.5" fill="#222" textLength="13.28" lengthAdjust="spacingAndGlyphs">02/15</text>
<text x="428.7" y="283.55" font-size="5.5" fill="#222" textLength="13.28" lengthAdjust="spacingAndGlyphs">02/17</text>
<text x="475" y="283.55" font-size="5.5" fill="#222" textLength="2.95" lengthAdjust="spacingAndGlyphs">2</text>
<rect x="38.3" y="291.3" width="4.2" height="4.2" fill="#fff" stroke="#6e6e6e" stroke-width="0.55"/>
<rect x="38.3" y="291.1" width="4.2" height="0.7" fill="#555"/>
<text x="62.5" y="295.6" font-size="5.5" fill="#222" textLength="18.29" lengthAdjust="spacingAndGlyphs">Task 16</text>
<text x="274.2" y="295.6" font-size="5.5" fill="#222" textLength="26.84" lengthAdjust="spacingAndGlyphs">Not Started</text>
<text x="382.3" y="295.6" font-size="5.5" fill="#222" textLength="13.28" lengthAdjust="spacingAndGlyphs">02/15</text>
<text x="428.7" y="295.6" font-size="5.5" fill="#222" textLength="13.28" lengthAdjust="spacingAndGlyphs">02/17</text>
<text x="475" y="295.6" font-size="5.5" fill="#222" textLength="2.95" lengthAdjust="spacingAndGlyphs">2</text>
<rect x="38.3" y="303.4" width="4.2" height="4.2" fill="#fff" stroke="#6e6e6e" stroke-width="0.55"/>
<rect x="38.3" y="303.2" width="4.2" height="0.7" fill="#555"/>
<text x="62.5" y="307.65" font-size="5.5" fill="#222" textLength="18.29" lengthAdjust="spacingAndGlyphs">Task 17</text>
<text x="274.2" y="307.65" font-size="5.5" fill="#222" textLength="26.84" lengthAdjust="spacingAndGlyphs">Not Started</text>
<text x="382.3" y="307.65" font-size="5.5" fill="#222" textLength="13.28" lengthAdjust="spacingAndGlyphs">02/15</text>
<text x="428.7" y="307.65" font-size="5.5" fill="#222" textLength="13.28" lengthAdjust="spacingAndGlyphs">02/17</text>
<text x="475" y="307.65" font-size="5.5" fill="#222" textLength="2.95" lengthAdjust="spacingAndGlyphs">2</text>
<rect x="34.4" y="83.1" width="17.6" height="17.5" fill="rgba(198,206,250,.6)"/>
<rect x="34" y="120.4" width="17" height="17.6" fill="rgba(198,206,250,.6)"/>
<rect x="34" y="144" width="17" height="16.4" fill="rgba(198,206,250,.6)"/>
<rect x="34" y="168" width="18" height="16.8" fill="rgba(198,206,250,.6)"/>
<rect x="34" y="205.4" width="18.2" height="17.1" fill="rgba(198,206,250,.6)"/>
<rect x="33.3" y="231.3" width="16.7" height="17.5" fill="rgba(198,206,250,.6)"/>
<rect x="165" y="156.9" width="104.6" height="14.7" fill="rgba(198,206,250,.6)"/>
<rect x="164.7" y="189.2" width="88.3" height="65.6" fill="rgba(198,206,250,.6)"/>
<rect x="525.2" y="88" width="87.8" height="21.1" fill="rgba(198,206,250,.6)"/>
<path transform="translate(601.4 93.2)" d="M3.500 0L7 4.400H0zM0 6H7L3.500 10.400z" fill="#1a1a1a"/>
<text x="34.9" y="324.2" font-size="5.5" fill="#222" textLength="13.35" lengthAdjust="spacingAndGlyphs">12/30</text>
<rect x="40.85" y="328.3" width="0.9" height="125.3" fill="#e3e3e3"/>
<text x="84" y="324.2" font-size="5.5" fill="#222" textLength="13.35" lengthAdjust="spacingAndGlyphs">01/04</text>
<rect x="89.95" y="328.3" width="0.9" height="125.3" fill="#c6c6c6"/>
<text x="133.1" y="324.2" font-size="5.5" fill="#222" textLength="13.35" lengthAdjust="spacingAndGlyphs">01/09</text>
<rect x="139.05" y="328.3" width="0.9" height="125.3" fill="#cfcfcf"/>
<text x="182.2" y="324.2" font-size="5.5" fill="#222" textLength="13.35" lengthAdjust="spacingAndGlyphs">01/14</text>
<rect x="188.15" y="328.3" width="0.9" height="125.3" fill="#dedede"/>
<text x="231.3" y="324.2" font-size="5.5" fill="#222" textLength="13.35" lengthAdjust="spacingAndGlyphs">01/19</text>
<rect x="237.25" y="328.3" width="0.9" height="125.3" fill="#e6e6e6"/>
<text x="280.4" y="324.2" font-size="5.5" fill="#222" textLength="13.35" lengthAdjust="spacingAndGlyphs">01/24</text>
<rect x="286.35" y="328.3" width="0.9" height="125.3" fill="#cdcdcd"/>
<text x="329.5" y="324.2" font-size="5.5" fill="#222" textLength="13.35" lengthAdjust="spacingAndGlyphs">01/29</text>
<rect x="335.45" y="328.3" width="0.9" height="125.3" fill="#bcbcbc"/>
<text x="378.6" y="324.2" font-size="5.5" fill="#222" textLength="13.35" lengthAdjust="spacingAndGlyphs">02/03</text>
<rect x="384.55" y="328.3" width="0.9" height="125.3" fill="#dedede"/>
<text x="427.7" y="324.2" font-size="5.5" fill="#222" textLength="13.35" lengthAdjust="spacingAndGlyphs">02/08</text>
<rect x="433.65" y="328.3" width="0.9" height="125.3" fill="#dedede"/>
<text x="476.8" y="324.2" font-size="5.5" fill="#222" textLength="13.35" lengthAdjust="spacingAndGlyphs">02/13</text>
<rect x="482.75" y="328.3" width="0.9" height="125.3" fill="#adadad"/>
<text x="525.9" y="324.2" font-size="5.5" fill="#222" textLength="13.35" lengthAdjust="spacingAndGlyphs">02/18</text>
<rect x="531.85" y="328.3" width="0.9" height="125.3" fill="#c6c6c6"/>
<text x="575" y="324.2" font-size="5.5" fill="#222" textLength="13.35" lengthAdjust="spacingAndGlyphs">02/23</text>
<rect x="41.3" y="327.9" width="541" height="0.7" fill="#e2e2e2"/>
<rect x="581.9" y="328.3" width="0.8" height="125.3" fill="#cfcfcf"/>
<rect x="208.24" y="330.45" width="49.5" height="3.3" fill="#1fb0e4"/>
<text x="587.3" y="334.05" font-size="5.5" fill="#222" textLength="76.88" lengthAdjust="spacingAndGlyphs">Task 1 - enter your own text here</text>
<rect x="580.5" y="335.1" width="1.8" height="0.6" fill="#bdbdbd"/>
<rect x="227.88" y="337.04" width="29.86" height="3.3" fill="#1fb0e4"/>
<text x="587.3" y="340.63" font-size="5.5" fill="#222" textLength="27.88" lengthAdjust="spacingAndGlyphs">Subtask 1.1</text>
<rect x="580.5" y="341.69" width="1.8" height="0.6" fill="#bdbdbd"/>
<rect x="267.16" y="343.62" width="10.22" height="3.3" fill="#92c353"/>
<text x="587.3" y="347.22" font-size="5.5" fill="#222" textLength="76.88" lengthAdjust="spacingAndGlyphs">Task 2 - enter your own text here</text>
<rect x="580.5" y="348.27" width="1.8" height="0.6" fill="#bdbdbd"/>
<rect x="267.16" y="350.21" width="10.22" height="3.3" fill="#92c353"/>
<text x="587.3" y="353.81" font-size="5.5" fill="#222" textLength="27.88" lengthAdjust="spacingAndGlyphs">Subtask 2.1</text>
<rect x="580.5" y="354.86" width="1.8" height="0.6" fill="#bdbdbd"/>
<rect x="267.16" y="356.79" width="59.32" height="3.3" fill="#2f62f2"/>
<text x="587.3" y="360.39" font-size="5.5" fill="#222" textLength="15.26" lengthAdjust="spacingAndGlyphs">Task 3</text>
<rect x="580.5" y="361.44" width="1.8" height="0.6" fill="#bdbdbd"/>
<rect x="316.26" y="363.38" width="20.04" height="3.3" fill="#2f62f2"/>
<text x="587.3" y="366.98" font-size="5.5" fill="#222" textLength="15.26" lengthAdjust="spacingAndGlyphs">Task 4</text>
<rect x="580.5" y="368.03" width="1.8" height="0.6" fill="#bdbdbd"/>
<rect x="326.08" y="369.96" width="69.14" height="3.3" fill="#2f62f2"/>
<text x="587.3" y="373.56" font-size="5.5" fill="#222" textLength="15.26" lengthAdjust="spacingAndGlyphs">Task 5</text>
<rect x="580.5" y="374.61" width="1.8" height="0.6" fill="#bdbdbd"/>
<rect x="404.64" y="376.55" width="39.68" height="3.3" fill="#2f62f2"/>
<text x="587.3" y="380.15" font-size="5.5" fill="#222" textLength="15.26" lengthAdjust="spacingAndGlyphs">Task 6</text>
<rect x="580.5" y="381.2" width="1.8" height="0.6" fill="#bdbdbd"/>
<rect x="326.08" y="383.13" width="78.96" height="3.3" fill="#fb0007"/>
<text x="587.3" y="386.73" font-size="5.5" fill="#222" textLength="15.26" lengthAdjust="spacingAndGlyphs">Task 7</text>
<rect x="580.5" y="387.78" width="1.8" height="0.6" fill="#bdbdbd"/>
<rect x="394.82" y="389.72" width="20.04" height="3.3" fill="#fb0007"/>
<text x="587.3" y="393.32" font-size="5.5" fill="#222" textLength="15.26" lengthAdjust="spacingAndGlyphs">Task 8</text>
<rect x="580.5" y="394.37" width="1.8" height="0.6" fill="#bdbdbd"/>
<rect x="424.28" y="396.3" width="29.86" height="3.3" fill="#0aa653"/>
<text x="587.3" y="399.9" font-size="5.5" fill="#222" textLength="15.26" lengthAdjust="spacingAndGlyphs">Task 9</text>
<rect x="580.5" y="400.95" width="1.8" height="0.6" fill="#bdbdbd"/>
<rect x="443.92" y="402.89" width="29.86" height="3.3" fill="#0aa653"/>
<text x="587.3" y="406.49" font-size="5.5" fill="#222" textLength="18.2" lengthAdjust="spacingAndGlyphs">Task 10</text>
<rect x="580.5" y="407.54" width="1.8" height="0.6" fill="#bdbdbd"/>
<rect x="463.56" y="409.47" width="29.86" height="3.3" fill="#660a6e"/>
<text x="587.3" y="413.07" font-size="5.5" fill="#222" textLength="17.8" lengthAdjust="spacingAndGlyphs">Task 11</text>
<rect x="580.5" y="414.12" width="1.8" height="0.6" fill="#bdbdbd"/>
<rect x="502.84" y="416.06" width="20.04" height="3.3" fill="#660a6e"/>
<text x="587.3" y="419.66" font-size="5.5" fill="#222" textLength="18.2" lengthAdjust="spacingAndGlyphs">Task 12</text>
<rect x="580.5" y="420.71" width="1.8" height="0.6" fill="#bdbdbd"/>
<rect x="502.84" y="422.64" width="20.04" height="3.3" fill="#fcc112"/>
<text x="587.3" y="426.24" font-size="5.5" fill="#222" textLength="18.2" lengthAdjust="spacingAndGlyphs">Task 13</text>
<rect x="580.5" y="427.29" width="1.8" height="0.6" fill="#bdbdbd"/>
<rect x="502.84" y="429.23" width="20.04" height="3.3" fill="#fcc112"/>
<text x="587.3" y="432.83" font-size="5.5" fill="#222" textLength="18.2" lengthAdjust="spacingAndGlyphs">Task 14</text>
<rect x="580.5" y="433.88" width="1.8" height="0.6" fill="#bdbdbd"/>
<rect x="502.84" y="435.81" width="20.04" height="3.3" fill="#f59448"/>
<text x="587.3" y="439.41" font-size="5.5" fill="#222" textLength="18.2" lengthAdjust="spacingAndGlyphs">Task 15</text>
<rect x="580.5" y="440.46" width="1.8" height="0.6" fill="#bdbdbd"/>
<rect x="502.84" y="442.4" width="20.04" height="3.3" fill="#f59448"/>
<text x="587.3" y="446" font-size="5.5" fill="#222" textLength="18.2" lengthAdjust="spacingAndGlyphs">Task 16</text>
<rect x="580.5" y="447.05" width="1.8" height="0.6" fill="#bdbdbd"/>
<rect x="502.84" y="448.98" width="20.04" height="3.3" fill="#f59448"/>
<text x="587.3" y="452.58" font-size="5.5" fill="#222" textLength="18.2" lengthAdjust="spacingAndGlyphs">Task 17</text>
<rect x="580.5" y="453.63" width="1.8" height="0.6" fill="#bdbdbd"/>
</svg>
</div>
<div id="scroll"></div>
<div id="side">
  <div class="t" style="left:27.500px;top:14.800px;font-size:15.500px;font-weight:bold;color:#363636;letter-spacing:-0.327px">Form Field Order</div>
  <div class="fitem" style="top:42px;height:35px">
    <svg class="abs" style="left:7px;top:15px" width="10" height="10" viewBox="0 0 10 10"><path d="M0.300 1H9.900M0.300 4.900H9.900M0.300 8.800H9.900" stroke="#2f2f2f" stroke-width="1.600" fill="none"/></svg>
    <div class="tx" style="top:9.1px;letter-spacing:-0.359px">Text-F2z57_WZES</div>
  </div>
  <div class="fitem" style="top:78px;height:33px">
    <svg class="abs" style="left:7px;top:14px" width="10" height="10" viewBox="0 0 10 10"><path d="M0.300 1H9.900M0.300 4.900H9.900M0.300 8.800H9.900" stroke="#2f2f2f" stroke-width="1.600" fill="none"/></svg>
    <div class="tx" style="top:8.1px;letter-spacing:-0.291px">CheckBox-6IygJbEYVb</div>
  </div>
  <div class="fitem" style="top:112px;height:35px">
    <svg class="abs" style="left:7px;top:15px" width="10" height="10" viewBox="0 0 10 10"><path d="M0.300 1H9.900M0.300 4.900H9.900M0.300 8.800H9.900" stroke="#2f2f2f" stroke-width="1.600" fill="none"/></svg>
    <div class="tx" style="top:0.4px;letter-spacing:-0.326px">CheckBox-</div>
    <div class="tx" style="top:18.1px;letter-spacing:-0.208px">aGWZVuOqGk</div>
  </div>
  <div class="fitem" style="top:148px;height:34px">
    <svg class="abs" style="left:7px;top:14px" width="10" height="10" viewBox="0 0 10 10"><path d="M0.300 1H9.900M0.300 4.900H9.900M0.300 8.800H9.900" stroke="#2f2f2f" stroke-width="1.600" fill="none"/></svg>
    <div class="tx" style="top:8.6px;letter-spacing:-0.225px">CheckBox-vcQbZF12s0</div>
  </div>
  <div class="fitem" style="top:183px;height:34px">
    <svg class="abs" style="left:7px;top:14px" width="10" height="10" viewBox="0 0 10 10"><path d="M0.300 1H9.900M0.300 4.900H9.900M0.300 8.800H9.900" stroke="#2f2f2f" stroke-width="1.600" fill="none"/></svg>
    <div class="tx" style="top:8.6px;letter-spacing:-0.081px">CheckBox-vjVC0Mj7ql</div>
  </div>
  <div class="fitem" style="top:218px;height:34px">
    <svg class="abs" style="left:7px;top:14px" width="10" height="10" viewBox="0 0 10 10"><path d="M0.300 1H9.900M0.300 4.900H9.900M0.300 8.800H9.900" stroke="#2f2f2f" stroke-width="1.600" fill="none"/></svg>
    <div class="tx" style="top:8.6px;letter-spacing:-0.145px">CheckBox-IgVoI2n3Uv</div>
  </div>
  <div class="fitem" style="top:253px;height:34px">
    <svg class="abs" style="left:7px;top:14px" width="10" height="10" viewBox="0 0 10 10"><path d="M0.300 1H9.900M0.300 4.900H9.900M0.300 8.800H9.900" stroke="#2f2f2f" stroke-width="1.600" fill="none"/></svg>
    <div class="tx" style="top:8.6px;letter-spacing:-0.253px">CheckBox--BCBisIHJD</div>
  </div>
  <div class="fitem" style="top:288px;height:35px">
    <svg class="abs" style="left:7px;top:15px" width="10" height="10" viewBox="0 0 10 10"><path d="M0.300 1H9.900M0.300 4.900H9.900M0.300 8.800H9.900" stroke="#2f2f2f" stroke-width="1.600" fill="none"/></svg>
    <div class="tx" style="top:9.1px;letter-spacing:-0.230px">Paragraph-H9l4oe2FHs</div>
  </div>
  <div class="fitem" style="top:324px;height:34px">
    <svg class="abs" style="left:7px;top:14px" width="10" height="10" viewBox="0 0 10 10"><path d="M0.300 1H9.900M0.300 4.900H9.900M0.300 8.800H9.900" stroke="#2f2f2f" stroke-width="1.600" fill="none"/></svg>
    <div class="tx" style="top:8.6px;letter-spacing:-0.132px">Dropdown-IwXPJUN1mP</div>
  </div>
</div>
<div id="menu">
  <div class="mi" style="top:0;height:32px;background:#f2f2f2;border-radius:3px 3px 0 0"><span style="top:7.500px">Download</span></div>
  <div class="mi" style="top:32px"><span style="top:6.800px">Print</span></div>
  <div class="mi" style="top:64px"><span style="top:6.600px">Export to Dropbox</span></div>
  <div class="mi" style="top:96px"><span style="top:6.700px">Export to Google Drive</span></div>
  <svg class="abs" style="left:0;top:0" width="40" height="126" viewBox="539 34 40 126">
    <!-- download -->
    <g fill="#2b2b2b">
      <path d="M558.500 43.800h3.400v4.300h2.600l-4.300 4.500l-4.300-4.500h2.600z"/>
      <path d="M554.600 51.400h3.200l2.400 2.400l2.400-2.400h3.200v3.800h-11.200z"/>
    </g>
    <!-- print -->
    <g fill="none" stroke="#2b2b2b" stroke-width="1.700" stroke-linejoin="round">
      <path d="M557.200 79.500V76.200h4.800l1.200 1.200v2.100"/>
      <path d="M557 84.200h-1.700v-3.600q0-1 1-1h7.800q1 0 1 1v3.600h-1.700"/>
      <rect x="557.200" y="82.600" width="6" height="2.900"/>
    </g>
    <!-- dropbox -->
    <g fill="#2b2b2b">
      <path d="M557.400 107.600l2.800 1.800l-2.800 1.800l-2.800-1.800z"/>
      <path d="M563 107.600l2.800 1.800l-2.800 1.800l-2.800-1.800z"/>
      <path d="M557.400 111.200l2.800 1.800l-2.800 1.800l-2.800-1.800z"/>
      <path d="M563 111.200l2.800 1.800l-2.800 1.800l-2.800-1.800z"/>
      <path d="M560.200 113.700l2.800 1.800l-2.800 1.800l-2.800-1.800z"/>
    </g>
    <!-- google drive -->
    <g fill="#2b2b2b">
      <path d="M558.300 139.700h3.800l3.800 6.400h-3.800z"/>
      <path d="M557.700 140.600l1.900 3.200l-3.300 5.600l-1.900-3.200z"/>
      <path d="M558.500 146.800h7.400l-1.800 3h-7.400z"/>
    </g>
  </svg>
</div>
</body></html>
